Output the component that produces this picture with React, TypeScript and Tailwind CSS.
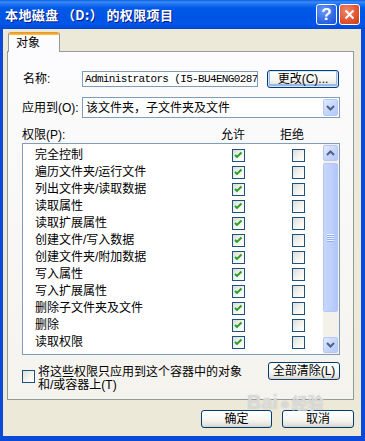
// Windows XP "permission entry" dialog (本地磁盘 (D:) 的权限项目)

import type { ReactNode } from "react";
import clsx from "clsx";

// ─── Data ─────────────────────────────────────────────────────────────────────

const PERMISSIONS = [
  "完全控制",
  "遍历文件夹/运行文件",
  "列出文件夹/读取数据",
  "读取属性",
  "读取扩展属性",
  "创建文件/写入数据",
  "创建文件夹/附加数据",
  "写入属性",
  "写入扩展属性",
  "删除子文件夹及文件",
  "删除",
  "读取权限",
];

// ─── Small pieces ─────────────────────────────────────────────────────────────

function XpCheck({ checked }: { checked?: boolean }) {
  return (
    <span className="flex h-[13px] w-[13px] shrink-0 items-center justify-center border border-[#1c5180] bg-[linear-gradient(135deg,#dcdcd7,#f4f4f0_55%,#ffffff)]">
      {checked && (
        <svg width="11" height="11" viewBox="0 0 11 11" aria-hidden="true">
          <path d="M2 5 L4 7 L8.5 2.5" fill="none" stroke="#21a121" strokeWidth="1.9" />
        </svg>
      )}
    </span>
  );
}

function XpButton({
  children,
  className,
  focused,
}: {
  children: ReactNode;
  className?: string;
  focused?: boolean;
}) {
  return (
    <div
      className={clsx(
        "flex shrink-0 items-center justify-center whitespace-nowrap rounded-[3px] border border-[#003c74] bg-[linear-gradient(to_bottom,#ffffff,#f6f6f2_55%,#e6e4dc_85%,#d6d0c5)] text-[12px] leading-none text-black",
        focused && "shadow-[inset_0_0_0_1px_#cee7ff,inset_0_-1px_0_2px_#98b8ea]",
        className,
      )}
    >
      {children}
    </div>
  );
}

function Chevron({ up }: { up?: boolean }) {
  return (
    <svg width="9" height="6" viewBox="0 0 9 6" aria-hidden="true">
      <path
        d={up ? "M1 5 L4.5 1.5 L8 5" : "M1 1 L4.5 4.5 L8 1"}
        fill="none"
        stroke="#4d6185"
        strokeWidth="2"
      />
    </svg>
  );
}

function ScrollArrow({ up }: { up?: boolean }) {
  return (
    <div className="flex h-[16px] items-center justify-center rounded-[2px] border border-[#b5c8f5] bg-[linear-gradient(135deg,#e1eafe,#c3d3fd_60%,#b4c8f6)]">
      <Chevron up={up} />
    </div>
  );
}

// ─── Title bar ────────────────────────────────────────────────────────────────

function TitleBar() {
  return (
    <div className="flex h-[29px] shrink-0 items-center bg-[linear-gradient(to_bottom,#0a5ee8_0px,#3a8bf6_2px,#2274f2_4px,#0059e8_8px,#0054e3_18px,#0057ea_24px,#0047d4_29px)] pl-[5px] pr-[5px]">
      <span className="text-[13px] font-bold tracking-[0.4px] text-white [text-shadow:1px_1px_0_#0a1883] [font-family:'Noto_Sans_CJK_SC',sans-serif]">
        本地磁盘 （D:） 的权限项目
      </span>
      <div className="ml-auto flex gap-[2px]">
        <div className="flex h-[21px] w-[21px] items-center justify-center rounded-[3px] border border-white bg-[radial-gradient(circle_at_35%_30%,#6a9bfb,#2f68e4_60%,#1c4fd0)] text-[17px] font-bold leading-none text-white">
          ?
        </div>
        <div className="flex h-[21px] w-[21px] items-center justify-center rounded-[3px] border border-white bg-[radial-gradient(circle_at_35%_30%,#f0866a,#e0532e_60%,#c73c1a)]">
          <svg width="11" height="11" viewBox="0 0 11 11" aria-hidden="true">
            <path d="M1.5 1.5 L9.5 9.5 M9.5 1.5 L1.5 9.5" stroke="white" strokeWidth="2" />
          </svg>
        </div>
      </div>
    </div>
  );
}

// ─── Permission list ──────────────────────────────────────────────────────────

function PermissionList() {
  return (
    <div className="flex h-[212px] border border-[#7f9db9] bg-white">
      <div className="flex-1 pt-[3px]">
        {PERMISSIONS.map((label) => (
          <div key={label} className="flex h-[17px] items-center pl-[12px] text-[12px]">
            <span className="w-[197px] leading-[17px]">{label}</span>
            <XpCheck checked />
            <span className="w-[47px]" />
            <XpCheck />
          </div>
        ))}
      </div>
      {/* scrollbar */}
      <div className="flex w-[16px] flex-col bg-[#f3f1ea] py-[1px] pr-[1px]">
        <ScrollArrow up />
        <div className="mt-[2px] flex h-[149px] items-center justify-center rounded-[2px] border border-[#b5c8f5] bg-[linear-gradient(to_right,#c8d6fb,#bccefa_60%,#b1c6f8)]">
          <div className="flex flex-col gap-[1px]">
            {[0, 1, 2, 3].map((i) => (
              <div key={i} className="h-[1px] w-[7px] bg-[#eef4fe] shadow-[0_1px_0_#8cb0f8]" />
            ))}
          </div>
        </div>
        <div className="flex-1" />
        <ScrollArrow />
      </div>
    </div>
  );
}

// ─── Main ─────────────────────────────────────────────────────────────────────

export default function App() {
  return (
    <div className="relative flex h-[441px] w-[365px] flex-col overflow-hidden font-['Liberation_Sans','Noto_Sans_CJK_SC',sans-serif] text-black">
      <TitleBar />

      <div className="flex flex-1 flex-col border-b-[5px] border-l-[3px] border-r-[4px] border-[#0b49d8] bg-[#ece9d8] pl-[4px] pt-[3px]">
        {/* Tab strip */}
        <div className="relative z-10 -mb-px flex h-[20px]">
          <div className="ml-[1px] flex w-[52px] flex-col overflow-hidden rounded-t-[3px] border-x border-[#919b9c] bg-[#fcfcfe]">
            <div className="h-[3px] bg-[linear-gradient(to_bottom,#e68b2c,#ffc73c)]" />
            <span className="pl-[7px] text-[12px] leading-[16px]">对象</span>
          </div>
        </div>

        {/* Tab panel */}
        <div className="flex h-[349px] w-[347px] flex-col border border-[#919b9c] bg-[linear-gradient(to_bottom,#fcfcfe,#f4f3ee)] pl-[14px] text-[12px]">
          {/* Name */}
          <div className="mt-[18px] flex h-[18px] items-center">
            <span className="w-[60px] pl-[1px]">名称:</span>
            <div className="flex h-[16px] w-[176px] items-center overflow-hidden whitespace-nowrap border border-[#7f9db9] bg-white pl-[2px] text-[11px] tracking-[-0.65px] [font-family:'Liberation_Mono',monospace]">
              Administrators (I5-BU4ENG0287
            </div>
            <XpButton focused className="ml-[9px] h-[18px] w-[72px]">
              更改(C)...
            </XpButton>
          </div>

          {/* Apply to */}
          <div className="mt-[9px] flex h-[21px] items-center">
            <span className="w-[60px]">应用到(O):</span>
            <div className="flex h-[21px] w-[258px] items-center border border-[#7f9db9] bg-white pl-[3px]">
              <span>该文件夹，子文件夹及文件</span>
              <div className="ml-auto mr-[1px] flex h-[17px] w-[15px] items-center justify-center rounded-[2px] border border-[#b5c8f5] bg-[linear-gradient(135deg,#e1eafe,#c3d3fd_60%,#b4c8f6)]">
                <Chevron />
              </div>
            </div>
          </div>

          {/* Header */}
          <div className="mt-[9px] flex h-[16px] items-center">
            <span className="w-[199px]">权限(P):</span>
            <span className="w-[24px]">允许</span>
            <span className="ml-[35px]">拒绝</span>
          </div>

          <div className="w-[318px]">
            <PermissionList />
          </div>

          {/* Inherit option + clear all */}
          <div className="mt-[7px] flex w-[318px] items-start">
            <div className="mt-[8px]">
              <XpCheck />
            </div>
            <div className="ml-[3px] mt-[4px] flex flex-col gap-[1px] text-[12px]">
              <span className="leading-[12px]">将这些权限只应用到这个容器中的对象</span>
              <span className="leading-[12px]">和/或容器上(T)</span>
            </div>
            <XpButton className="ml-auto h-[18px] w-[72px]">全部清除(L)</XpButton>
          </div>
        </div>

        {/* Dialog buttons */}
        <div className="mt-[10px] flex justify-end gap-[10px] pr-[7px]">
          <XpButton className="h-[18px] w-[71px]">确定</XpButton>
          <XpButton className="h-[18px] w-[72px]">取消</XpButton>
        </div>
      </div>

      {/* Baidu watermark */}
      <div className="pointer-events-none absolute left-[247px] top-[392px] flex flex-col items-center leading-none text-white/50 [text-shadow:0_0_1px_#b0b0b0]">
        <span className="text-[20px] font-bold">
          Bai<span className="mx-[2px] text-[16px]">●</span>
          <span className="text-[16px]">经验</span>
        </span>
      </div>
    </div>
  );
}
